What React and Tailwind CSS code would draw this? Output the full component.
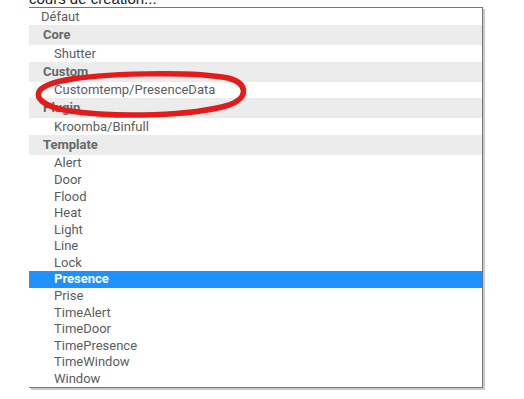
import React from "react";

const groups = [
  { label: "Core", items: ["Shutter"] },
  { label: "Custom", items: ["Customtemp/PresenceData"] },
  { label: "Plugin", items: ["Kroomba/Binfull"] },
  {
    label: "Template",
    items: [
      "Alert", "Door", "Flood", "Heat", "Light", "Line", "Lock", "Presence",
      "Prise", "TimeAlert", "TimeDoor", "TimePresence", "TimeWindow", "Window",
    ],
  },
];

export default function App() {
  return (
    <div className="relative w-[524px] h-[399px] bg-white overflow-hidden font-['Roboto',sans-serif]">
      <div className="h-[7px] overflow-hidden pl-[29px]">
        <div className="-mt-[10px] text-[15px] leading-[17px] text-[#222] font-['Liberation_Sans',sans-serif]">
          cours de création...
        </div>
      </div>
      <div className="ml-[29px] w-[454px] border-t border-r border-b border-[#777] bg-white shadow-[2px_2px_0_#c9c9c9] text-[13px]">
        <div className="h-[17px] flex items-center pl-[12px] text-[#5a5d60]">Défaut</div>
        {groups.map((g) => (
          <div key={g.label}>
            <div className="h-[20px] flex items-center pl-[14px] bg-[#ebeceb] font-bold text-[#65686a]">
              {g.label}
            </div>
            {g.items.map((it) => {
              const sel = it === "Presence";
              return (
                <div
                  key={it}
                  className={
                    sel
                      ? "h-[16.6px] flex items-center pl-[25px] bg-[#1e90ff] text-white font-bold"
                      : "h-[16.6px] flex items-center pl-[25px] text-[#5a5d60]"
                  }
                >
                  {it}
                </div>
              );
            })}
          </div>
        ))}
      </div>
      <svg
        className="absolute left-0 top-0 pointer-events-none"
        width="524"
        height="399"
        viewBox="0 0 524 399"
      >
        <path
          d="M 62 81 C 100 73, 192 71, 228 78 C 250 84, 247 99, 229 105 C 192 116, 118 118, 70 111 C 43 107, 33 97, 41 89 C 49 83, 62 80, 78 78"
          fill="none"
          stroke="#e31b1b"
          strokeWidth="5.5"
          strokeLinecap="round"
          strokeLinejoin="round"
        />
      </svg>
    </div>
  );
}
